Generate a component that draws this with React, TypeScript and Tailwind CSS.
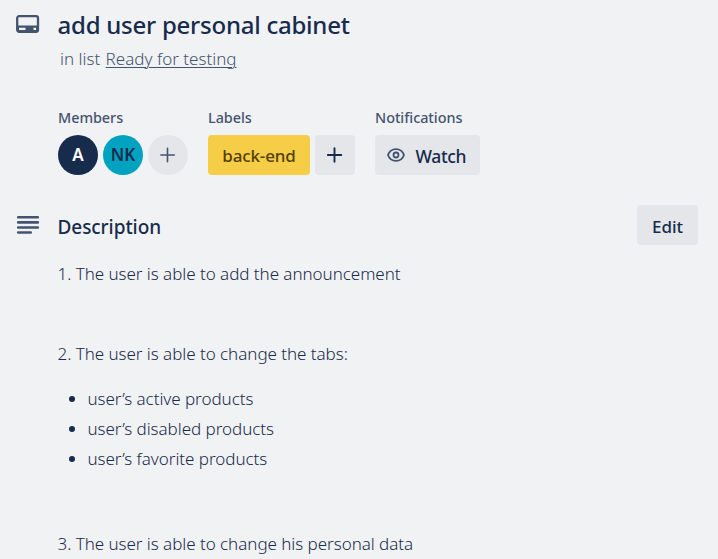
import type { ReactNode } from "react";

function CardIcon() {
  return (
    <svg width="24" height="20" viewBox="0 0 24 20" fill="none">
      <rect x="1.2" y="1.2" width="20.800" height="15.600" rx="2" stroke="#44546f" strokeWidth="2.300" />
      <path fillRule="evenodd" d="M1.5 10.5H21.5V17H1.5ZM3 12.700H9.500V14.900H3ZM17.500 12.700H20V14.900H17.500Z" fill="#44546f" />
    </svg>
  );
}

function DescriptionIcon() {
  return (
    <svg width="24" height="20" viewBox="0 0 24 20" stroke="#44546f" strokeWidth="2.600" strokeLinecap="round">
      <path d="M2.200 2.300H21.800M2.200 7.400H21.800M2.200 12.500H21.800M2.200 17.500H14.800" />
    </svg>
  );
}

function EyeIcon() {
  return (
    <svg width="18" height="14" viewBox="0 0 18 14" fill="none" stroke="#44546f" strokeWidth="1.800">
      <path d="M1 7C2.300 3.200 5.200 1.100 9 1.100S15.700 3.200 17 7C15.700 10.800 12.800 12.900 9 12.900S2.300 10.800 1 7Z" strokeLinejoin="round" />
      <circle cx="9" cy="7" r="2.500" />
    </svg>
  );
}

function PlusIcon({ color, width }: { color: string; width: number }) {
  return (
    <svg width="16" height="16" viewBox="0 0 16 16" stroke={color} strokeWidth={width} strokeLinecap="round">
      <path d="M7.500 1.300V14.700M0.900 8H14.300" />
    </svg>
  );
}

function Field({ label, children }: { label: string; children: ReactNode }) {
  return (
    <div className="flex flex-col">
      <h3 className="h-[27px] text-[14.400px] leading-[20px] font-medium tracking-[-0.04px] text-[#44546f]">{label}</h3>
      <div className="flex gap-[5px]">{children}</div>
    </div>
  );
}

export default function App() {
  return (
    <main className="h-[559px] w-[718px] overflow-hidden bg-[#f1f2f4] font-['Noto_Sans','Segoe_UI',sans-serif] text-[#172b4d] whitespace-nowrap">
      <header className="flex h-[108px]">
        <div className="w-[57.500px] shrink-0 pt-[15px] pl-4"><CardIcon /></div>
        <div>
          <h1 className="h-[44px] pt-[10px] text-[24px] leading-[30px] font-medium tracking-[-0.240px]">add user personal cabinet</h1>
          <p className="pl-[2.500px] text-[17px] leading-[30px] font-light text-[#44546f]">
            in list <a className="ml-px underline decoration-1 underline-offset-2">Ready for testing</a>
          </p>
        </div>
      </header>
      <section className="flex h-[97px] gap-5 pl-[58px]">
        <Field label="Members">
          <span className="flex size-10 items-center justify-center rounded-full bg-[#172b4d] text-[17px] font-semibold text-white">A</span>
          <span className="flex size-10 items-center justify-center rounded-full bg-[#00a3bf] text-[17px] font-semibold">NK</span>
          <button className="flex size-10 items-center justify-center rounded-full bg-[#e4e6ea]"><PlusIcon color="#44546f" width={1.600} /></button>
        </Field>
        <Field label="Labels">
          <span className="flex h-10 w-[102px] items-center justify-center rounded-[4px] bg-[#f5cd47] pt-[2px] text-[17px] font-medium tracking-[-0.150px] text-[#533f04]">back-end</span>
          <button className="flex size-10 items-center justify-center rounded-[4px] bg-[#e4e6ea]"><PlusIcon color="#172b4d" width={1.900} /></button>
        </Field>
        <Field label="Notifications">
          <button className="flex h-10 w-[105px] items-center gap-[11px] rounded-[4px] bg-[#e4e6ea] pl-[11.500px] text-[17.500px] font-medium tracking-[-0.350px]"><EyeIcon /><span className="pt-[2px]">Watch</span></button>
        </Field>
      </section>
      <section>
        <div className="flex h-[54px]">
          <div className="w-[57.500px] shrink-0 pt-[10px] pl-4"><DescriptionIcon /></div>
          <h2 className="w-[579.500px] pt-[7px] text-[19px] leading-[30px] font-medium tracking-[-0.060px]">Description</h2>
          <button className="h-10 w-[61px] rounded-[4px] bg-[#e4e6ea] pt-[3px] text-[17px] font-medium">Edit</button>
        </div>
        <div className="pl-[57.500px] text-[17px] leading-[30px] font-light tracking-[-0.040px]">
          <p>1. The user is able to add the announcement</p>
          <p className="mt-[50px]">2. The user is able to change the tabs:</p>
          <ul className="mt-[15px]">
            {["user’s active products", "user’s disabled products", "user’s favorite products"].map((item) => (
              <li key={item} className="flex items-center">
                <span className="mr-[12.500px] ml-[11px] size-[6.500px] rounded-full bg-[#172b4d]" />{item}
              </li>
            ))}
          </ul>
          <p className="mt-[55px]">3. The user is able to change his personal data</p>
        </div>
      </section>
    </main>
  );
}
